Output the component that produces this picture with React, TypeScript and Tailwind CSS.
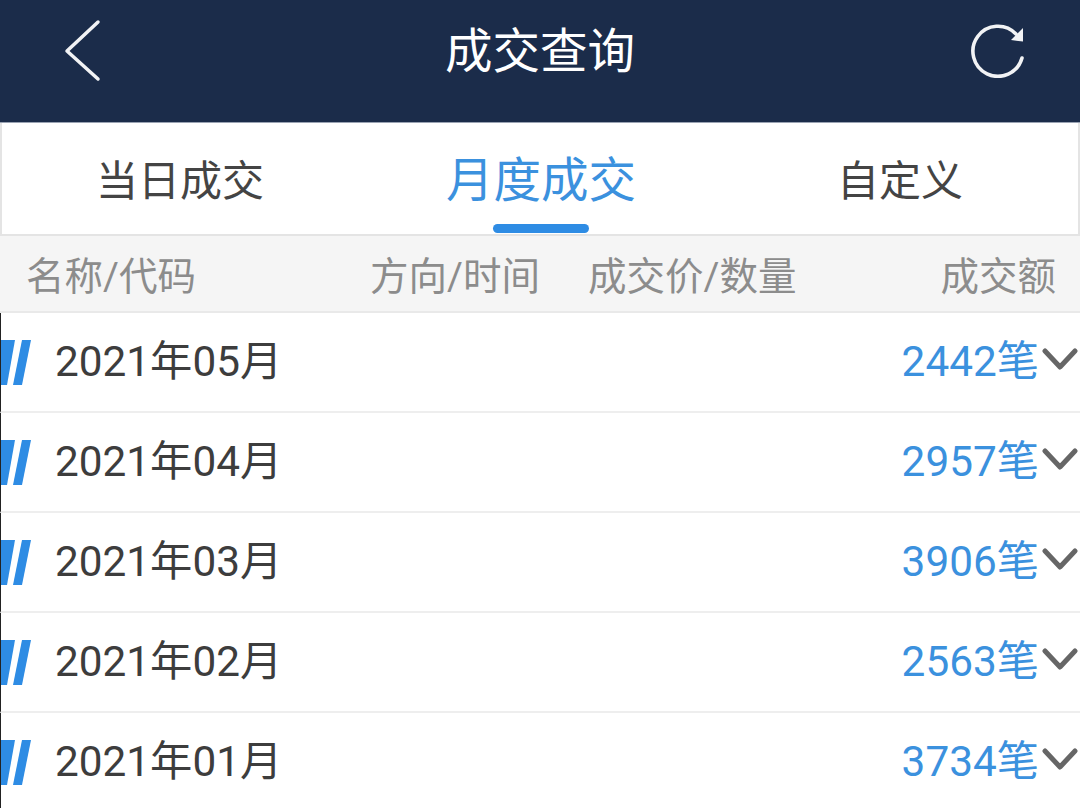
const MONTHS = [
  { label: "2021年05月", count: "2442笔" },
  { label: "2021年04月", count: "2957笔" },
  { label: "2021年03月", count: "3906笔" },
  { label: "2021年02月", count: "2563笔" },
  { label: "2021年01月", count: "3734笔" },
];

const FONT = "font-['Roboto','Noto_Sans_CJK_SC',sans-serif]";

export default function App() {
  return (
    <div className={`${FONT} w-[1080px] h-[808px] overflow-hidden bg-white`}>
      {/* Top bar */}
      <header className="h-[123px] bg-[#1b2c4a] border-b border-[#9aa3b3] flex items-center justify-between pl-[64px] pr-[54px] pb-[16px] text-white">
        <svg viewBox="0 0 46 64" className="w-[46px] h-[64px] -mt-[6px]" fill="none">
          <path d="M34 4L3 33l31 28" stroke="#f2f3f5" strokeWidth="3.500" strokeLinecap="round" strokeLinejoin="round" />
        </svg>
        <h1 className="text-[47.500px] leading-none font-normal">成交查询</h1>
        <svg viewBox="0 0 56 56" className="w-[56px] h-[56px] -mt-[6px]" fill="none">
          <path d="M52 36A25 25 0 1 1 46 12" stroke="#f2f3f5" strokeWidth="3.600" strokeLinecap="round" />
          <path d="M53 6v13.500L41 18z" fill="#f2f3f5" />
        </svg>
      </header>

      {/* Tabs */}
      <nav className="h-[113px] border-l-2 border-r-2 border-b-2 border-[#e4e4e4] flex items-center">
        <div className="w-[358px] pl-[94px] text-[42px] leading-none text-[#444] mt-[6px]">当日成交</div>
        <div className="w-[480px] h-full pl-[86px] relative flex items-center text-[47.500px] leading-none text-[#3b91de]">
          <span className="mt-[6px]">月度成交</span>
          <div className="absolute left-[133px] bottom-[1px] w-[96px] h-[9px] rounded-full bg-[#2e8ce4]" />
        </div>
        <div className="text-[42px] leading-none text-[#444] -ml-[3px] mt-[6px]">自定义</div>
      </nav>

      {/* Column headings */}
      <div className="h-[77px] bg-[#f5f5f5] border-b-2 border-[#e9e9e9] grid grid-cols-[370px_218px_1fr_auto] items-center pl-[26px] pr-[24px] pt-[8px] text-[38.500px] leading-none text-[#8c8c8c]">
        <span>名称/代码</span>
        <span className="-ml-[26px]">方向/时间</span>
        <span className="-ml-[26px]">成交价/数量</span>
        <span>成交额</span>
      </div>

      {/* Monthly rows */}
      {MONTHS.map((m) => (
        <div key={m.label} className="h-[100px] border-b-2 border-[#eeeeee] border-l border-l-[#222] flex items-center">
          <svg viewBox="0 0 30 46" className="w-[30px] h-[46px] shrink-0">
            <path d="M0 1h14L6 46H0z" fill="#2e8ce4" />
            <path d="M21 1h9l-9 45h-9z" fill="#2e8ce4" />
          </svg>
          <span className="ml-[24px] text-[42.300px] leading-none text-[#3d3d3d]">{m.label}</span>
          <span className="ml-auto text-[42.300px] leading-none text-[#3b91de]">{m.count}</span>
          <svg viewBox="0 0 36 24" className="w-[36px] h-[24px] ml-[3px] mr-[2px] -mt-[8px] shrink-0" fill="none">
            <path d="M3 5l15 16L33 5" stroke="#666" strokeWidth="5" strokeLinecap="round" strokeLinejoin="round" />
          </svg>
        </div>
      ))}
    </div>
  );
}
